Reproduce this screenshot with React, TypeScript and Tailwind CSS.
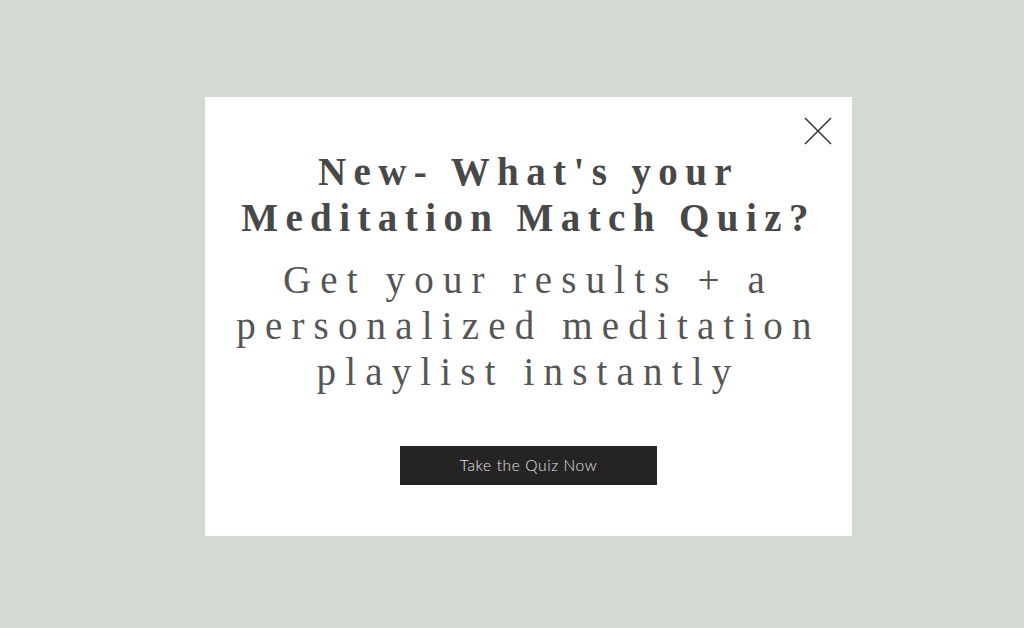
export default function App() {
  return (
    <div className="min-h-[628px] w-full bg-[#d4d9d3] pl-[205px] pt-[97px]">
      <div className="relative flex h-[439px] w-[647px] flex-col items-center bg-white pt-[52px]">
        <button className="absolute right-[20px] top-[20px] h-[28px] w-[28px] text-[#333]" aria-label="Close">
          <svg viewBox="0 0 28 28" className="h-full w-full" fill="none" stroke="currentColor" strokeWidth="1.5">
            <path d="M1 1 L27 27 M27 1 L1 27" />
          </svg>
        </button>
        <h2 className="text-center font-['Liberation_Serif',serif] text-[39px] font-bold leading-[46px] tracking-[0.19em] text-[#484848]">
          New- What's your
          <br />
          Meditation Match Quiz?
        </h2>
        <p className="mt-[16px] text-center font-['Liberation_Serif',serif] text-[39px] font-normal leading-[46px] tracking-[0.235em] text-[#555]">
          Get your results + a
          <br />
          personalized meditation
          <br />
          playlist instantly
        </p>
        <button className="mt-[51px] flex h-[39px] w-[257px] items-center justify-center bg-[#252323] font-['Lato',sans-serif] text-[15.5px] font-light tracking-[0.04em] text-[#e4e4e4]">
          Take the Quiz Now
        </button>
      </div>
    </div>
  );
}
